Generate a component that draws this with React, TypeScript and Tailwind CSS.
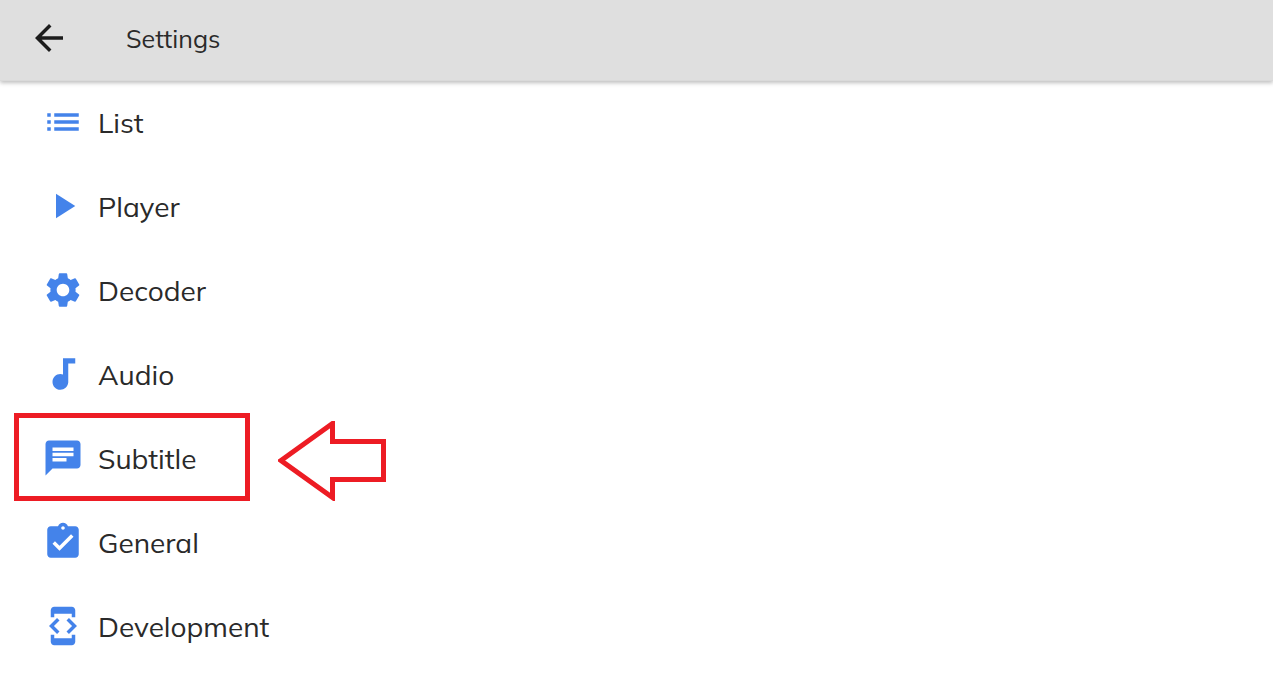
import type { IconType } from "react-icons";
import {
  MdArrowBack,
  MdAssignmentTurnedIn,
  MdAudiotrack,
  MdChat,
  MdDeveloperMode,
  MdList,
  MdPlayArrow,
  MdSettings,
} from "react-icons/md";

type SettingsItem = { label: string; icon: IconType; highlighted?: boolean };

const ITEMS: SettingsItem[] = [
  { label: "List", icon: MdList },
  { label: "Player", icon: MdPlayArrow },
  { label: "Decoder", icon: MdSettings },
  { label: "Audio", icon: MdAudiotrack },
  { label: "Subtitle", icon: MdChat, highlighted: true },
  { label: "General", icon: MdAssignmentTurnedIn },
  { label: "Development", icon: MdDeveloperMode },
];

// Red frame and arrow drawn over the highlighted row
function Callout() {
  return (
    <div className="pointer-events-none absolute -top-[3px] left-3.5 flex items-end gap-7">
      <div className="h-[88px] w-[236px] border-5 border-[#ed1c24]" />
      <svg
        width="108"
        height="80"
        viewBox="0 0 108 80"
        fill="none"
        stroke="#ed1c24"
        strokeWidth="5"
        strokeLinejoin="miter"
        aria-hidden="true"
      >
        <path d="M3 39.5L54.5 2.5V20.5H105.5V58.5H54.5V76.5Z" />
      </svg>
    </div>
  );
}

function SettingsRow({ label, icon: Icon, highlighted }: SettingsItem) {
  return (
    <li className="relative">
      <button
        type="button"
        className="flex h-21 w-full items-center gap-3.5 pl-[42px] text-left text-[28px] text-[#2a2a2a]"
      >
        <Icon size={42} className="shrink-0 text-[#4483ea]" />
        <span className="pt-0.5">{label}</span>
      </button>
      {highlighted && <Callout />}
    </li>
  );
}

export default function App() {
  return (
    <div className="bg-white font-['Muli','Mulish','Nunito','Open_Sans',sans-serif]">
      <header className="relative flex h-20 items-center gap-14 bg-[#dfdfdf] pb-1 pl-7 shadow-[0_1px_0_#dadada,0_3px_4px_rgba(0,0,0,0.25)]">
        <button type="button" aria-label="Back" className="text-[#1c1c1c]">
          <MdArrowBack size={42} />
        </button>
        <h1 className="pt-0.5 text-[25px] text-[#2a2a2a]">Settings</h1>
      </header>
      <main>
        <ul>
          {ITEMS.map((item) => (
            <SettingsRow key={item.label} {...item} />
          ))}
        </ul>
      </main>
    </div>
  );
}
